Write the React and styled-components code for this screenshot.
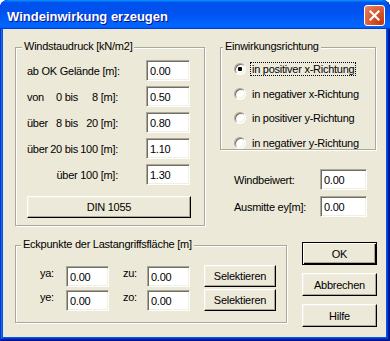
import React from "react";
import styled, { createGlobalStyle } from "styled-components";

const GlobalStyle = createGlobalStyle`
  body {
    margin: 0;
    background: #ffffff;
  }
`;

const FONT = `"Liberation Sans", Arial, sans-serif`;

const Window = styled.div`
  width: 390px;
  height: 341px;
  box-sizing: border-box;
  display: flex;
  flex-direction: column;
  background: #0855dd;
  border-radius: 8px 8px 0 0;
  overflow: hidden;
  box-shadow: inset -1px -1px #00138c, inset 1px 1px #0831d9,
    inset -2px -2px #001ea0, inset 2px 2px #166aee, inset -3px -3px #003bda,
    inset 3px 3px #0855dd;
  font-family: ${FONT};
  font-size: 11px;
  color: #000;
`;

const TitleBar = styled.div`
  height: 29px;
  flex: none;
  display: flex;
  align-items: center;
  justify-content: space-between;
  padding: 0 5px 0 7px;
  background: linear-gradient(
    180deg,
    #0997ff,
    #0053ee 8%,
    #0050ee 40%,
    #0066ff 88%,
    #0066ff 93%,
    #005bff 95%,
    #003dd7 96%,
    #003dd7
  );
  border-radius: 8px 8px 0 0;
`;

const Title = styled.span`
  padding-top: 3px;
  color: #fff;
  font-weight: bold;
  font-size: 13px;
  text-shadow: 1px 1px #0f1089;
  white-space: nowrap;
`;

const CloseButton = styled.div`
  width: 21px;
  height: 21px;
  box-sizing: border-box;
  margin-top: 2px;
  border: 1px solid #fff;
  border-radius: 3px;
  background: radial-gradient(circle at 85% 85%, #c43a10 0, #d9562a 45%, #e2734f 80%, #eb8f6f 100%);
  display: flex;
  align-items: center;
  justify-content: center;
`;

const Client = styled.div`
  flex: 1;
  margin: 0 4px 4px 3px;
  background: #ece9d8;
  padding: 18px 0 0 12px;
  display: flex;
  flex-direction: column;
  letter-spacing: -0.25px;
`;

const Row = styled.div`
  display: flex;
  align-items: flex-start;
  gap: ${(p) => p.$gap}px;
  margin-top: ${(p) => p.$top || 0}px;
`;

const Group = styled.div`
  position: relative;
  box-sizing: border-box;
  width: ${(p) => p.$w}px;
  height: ${(p) => p.$h}px;
  margin-top: ${(p) => p.$mt || 0}px;
  border: 1px solid #aca899;
  box-shadow: 1px 1px 0 #fff, inset 1px 1px 0 #fff;
  padding: ${(p) => p.$pad};
`;

const Legend = styled.span`
  position: absolute;
  top: -8px;
  left: ${(p) => p.$left}px;
  padding: 0 2px;
  line-height: 13px;
  background: #ece9d8;
  white-space: nowrap;
`;

const PressureGrid = styled.div`
  display: grid;
  grid-template-columns: 91px 44px;
  grid-auto-rows: 21px;
  column-gap: 28px;
  row-gap: 5px;
  align-items: center;
`;

const Label = styled.span`
  white-space: nowrap;
  text-align: ${(p) => p.$align || "left"};
`;

const SplitLabel = styled.div`
  display: grid;
  grid-template-columns: 1fr auto 40px;
  white-space: nowrap;

  span:last-child {
    text-align: right;
  }
`;

const Field = styled.div`
  width: ${(p) => p.$w}px;
  height: 21px;
  box-sizing: border-box;
  background: #fff;
  border: 1px solid;
  border-color: #aca899 #fff #fff #aca899;
  box-shadow: inset 1px 1px 0 #716f64, inset -1px -1px 0 #f1efe2;
  padding: 0 0 0 3px;
  display: flex;
  align-items: center;
  font-size: 11px;
`;

const Button = styled.div`
  box-sizing: border-box;
  width: ${(p) => p.$w}px;
  height: ${(p) => p.$h || 22}px;
  margin-top: ${(p) => p.$mt || 0}px;
  display: flex;
  align-items: center;
  justify-content: center;
  background: #ece9d8;
  border: 1px solid;
  border-color: ${(p) => (p.$default ? "#000" : "#fff #000 #000 #fff")};
  box-shadow: ${(p) =>
    p.$default
      ? "inset 1px 1px 0 #fff, inset -1px -1px 0 #000, inset -2px -2px 0 #aca899"
      : "inset -1px -1px 0 #aca899, inset 1px 1px 0 #f1efe2"};
  white-space: nowrap;
`;

const RightColumn = styled.div`
  display: flex;
  flex-direction: column;
`;

const RadioList = styled.div`
  display: grid;
  grid-auto-rows: 14px;
  row-gap: 10.5px;
`;

const RadioRow = styled.div`
  display: flex;
  align-items: center;
`;

const RadioCircle = styled.span`
  position: relative;
  width: 12px;
  height: 12px;
  box-sizing: border-box;
  border-radius: 50%;
  background: #fff;
  border: 1px solid;
  border-color: #aca899 #fff #fff #aca899;
  box-shadow: inset 1px 1px 0 #716f64, inset -1px -1px 0 #f1efe2;

  &::after {
    content: "";
    display: ${(p) => (p.$checked ? "block" : "none")};
    position: absolute;
    left: 3px;
    top: 3px;
    width: 4px;
    height: 4px;
    border-radius: 1px;
    background: #000;
  }
`;

const RadioText = styled.span`
  margin-left: 4px;
  padding: 0 1px;
  line-height: 12px;
  border: 1px dotted ${(p) => (p.$focus ? "#000" : "transparent")};
  white-space: nowrap;
`;

const ValueGrid = styled.div`
  display: grid;
  grid-template-columns: 86px 47px;
  grid-auto-rows: 21px;
  row-gap: 6px;
  align-items: center;
  margin: 19px 0 0 14px;
`;

const CornerGrid = styled.div`
  display: grid;
  grid-template-columns: 26px 57px 24px 57px 72px;
  grid-auto-rows: 22px;
  row-gap: 2px;
`;

const CornerLabel = styled.span`
  align-self: start;
  padding-top: 2px;
`;

const CornerField = styled(Field)`
  align-self: end;
`;

const DialogButtons = styled.div`
  display: flex;
  flex-direction: column;
  gap: 8px;
`;

const directions = [
  "in positiver x-Richtung",
  "in negativer x-Richtung",
  "in positiver y-Richtung",
  "in negativer y-Richtung",
];

function CloseIcon() {
  return (
    <svg width="13" height="13" viewBox="0 0 13 13">
      <path d="M2.5 2.5 L10.5 10.5 M10.5 2.5 L2.5 10.5" stroke="#fff" strokeWidth="2.2" strokeLinecap="square" />
    </svg>
  );
}

export default function App() {
  return (
    <>
      <GlobalStyle />
      <Window>
        <TitleBar>
          <Title>Windeinwirkung erzeugen</Title>
          <CloseButton>
            <CloseIcon />
          </CloseButton>
        </TitleBar>
        <Client>
          <Row $gap={15}>
            <Group $w={190} $h={179} $pad="12px 0 0 11px">
              <Legend $left={6}>Windstaudruck [kN/m2]</Legend>
              <PressureGrid>
                <Label>ab OK Gelände [m]:</Label>
                <Field $w={44}>0.00</Field>
                <SplitLabel>
                  <span>von</span>
                  <span>0 bis</span>
                  <span>8 [m]:</span>
                </SplitLabel>
                <Field $w={44}>0.50</Field>
                <SplitLabel>
                  <span>über</span>
                  <span>8 bis</span>
                  <span>20 [m]:</span>
                </SplitLabel>
                <Field $w={44}>0.80</Field>
                <SplitLabel>
                  <span>über</span>
                  <span>20 bis</span>
                  <span>100 [m]:</span>
                </SplitLabel>
                <Field $w={44}>1.10</Field>
                <Label $align="right">über 100 [m]:</Label>
                <Field $w={44}>1.30</Field>
              </PressureGrid>
              <Button $w={164} $mt={11}>DIN 1055</Button>
            </Group>
            <RightColumn>
              <Group $w={156} $h={103} $pad="14px 0 0 13px">
                <Legend $left={2}>Einwirkungsrichtung</Legend>
                <RadioList>
                  {directions.map((d, i) => (
                    <RadioRow key={d}>
                      <RadioCircle $checked={i === 0} />
                      <RadioText $focus={i === 0}>{d}</RadioText>
                    </RadioRow>
                  ))}
                </RadioList>
              </Group>
              <ValueGrid>
                <Label>Windbeiwert:</Label>
                <Field $w={47}>0.00</Field>
                <Label>Ausmitte ey[m]:</Label>
                <Field $w={47}>0.00</Field>
              </ValueGrid>
            </RightColumn>
          </Row>
          <Row $gap={15} $top={16}>
            <Group $w={272} $h={78} $mt={3} $pad="19px 0 0 24px">
              <Legend $left={5}>Eckpunkte der Lastangriffsfläche [m]</Legend>
              <CornerGrid>
                <CornerLabel>ya:</CornerLabel>
                <CornerField $w={43}>0.00</CornerField>
                <CornerLabel>zu:</CornerLabel>
                <CornerField $w={43}>0.00</CornerField>
                <Button $w={72}>Selektieren</Button>
                <CornerLabel>ye:</CornerLabel>
                <CornerField $w={43}>0.00</CornerField>
                <CornerLabel>zo:</CornerLabel>
                <CornerField $w={43}>0.00</CornerField>
                <Button $w={72}>Selektieren</Button>
              </CornerGrid>
            </Group>
            <DialogButtons>
              <Button $w={75} $h={23} $default>OK</Button>
              <Button $w={75} $h={23}>Abbrechen</Button>
              <Button $w={75} $h={23}>Hilfe</Button>
            </DialogButtons>
          </Row>
        </Client>
      </Window>
    </>
  );
}
